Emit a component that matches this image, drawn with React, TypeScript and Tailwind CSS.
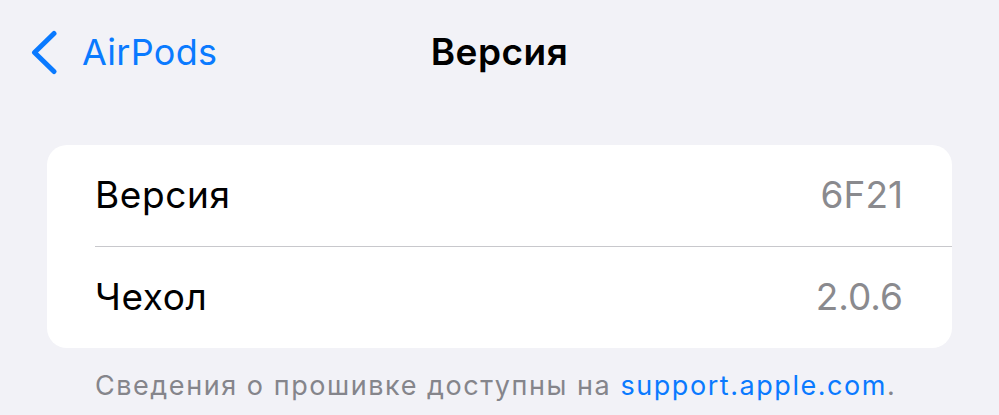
const rows = [
  { label: "Версия", value: "6F21" },
  { label: "Чехол", value: "2.0.6" },
];

const App = () => {
  return (
    <div
      className="w-[999px] h-[415px] overflow-hidden bg-[#f2f2f7] text-black"
      style={{ fontFamily: "Inter, 'Noto Sans', sans-serif" }}
    >
      {/* nav bar */}
      <div className="h-[104px] grid grid-cols-[1fr_auto_1fr] items-center">
        <div className="flex items-center pl-[31px] text-[#0a7aff]">
          <svg width="26" height="45" viewBox="0 0 26 45" fill="none">
            <path
              d="M23 3.5 L3.5 22.5 L23 41.5"
              stroke="#0a7aff"
              strokeWidth="5"
              strokeLinecap="round"
              strokeLinejoin="round"
            />
          </svg>
          <span className="ml-[25px] text-[36px] leading-[44px] tracking-[0.3px]">AirPods</span>
        </div>
        <h1 className="text-[37px] leading-[44px] font-semibold tracking-[0.5px]">Версия</h1>
        <div />
      </div>

      {/* card */}
      <div className="mt-[41px] mx-[47px] w-[905px] bg-white rounded-[20px]">
        {rows.map((r, i) => (
          <div key={r.label} className="pl-[48px]">
            <div
              className={
                "h-[101.5px] flex items-center justify-between pr-[49px] " +
                (i < rows.length - 1 ? "border-b border-[#c8c8cc]" : "")
              }
            >
              <span className="text-[37px] leading-[44px] tracking-[0.6px]">{r.label}</span>
              <span className="text-[37px] leading-[44px] text-[#8a8a8e]">{r.value}</span>
            </div>
          </div>
        ))}
      </div>

      {/* footer */}
      <p className="mt-[22px] pl-[95px] text-[27px] leading-[32px] tracking-[1.55px] text-[#85858b]">
        Сведения о прошивке доступны на{" "}
        <span className="text-[#0a7aff]">support.apple.com</span>.
      </p>
    </div>
  );
};

export default App;
